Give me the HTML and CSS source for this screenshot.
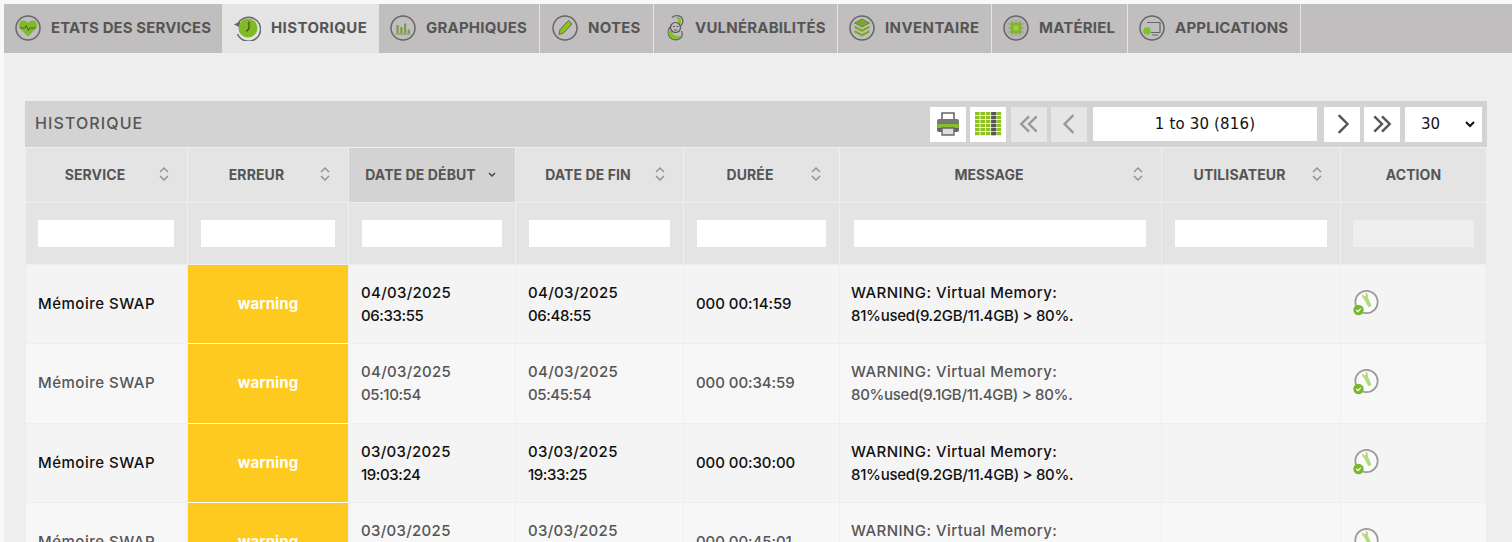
FILE: index.html
```html
<!DOCTYPE html>
<html lang="fr">
<head>
<meta charset="utf-8">
<title>Historique</title>
<link rel="stylesheet" href="styles.css">
</head>
<body>
<svg class="defs" width="0" height="0" aria-hidden="true">
  <defs>
    <symbol id="sort" viewBox="0 0 10 14"><path d="M1 5l4-4 4 4M1 9l4 4 4-4" fill="none" stroke="#8f8f8f" stroke-width="1.4"/></symbol>
    <symbol id="act" viewBox="0 0 26 28">
      <circle cx="13.500" cy="13" r="11.200" fill="#fafafa" stroke="#9a9a9a" stroke-width="1.700"/>
      <path d="M9.500 5l1.500 2.500 2-1-.5-3c2 .5 3 2.500 2.200 4.500l3.300 7.500c.8 2-2.200 3.500-3.200 1.500L11 9.800C9.200 9.300 8.700 7 9.500 5z" fill="#b2d97a"/>
      <circle cx="5.500" cy="21" r="5.200" fill="#78b82a"/>
      <path d="M3.200 21l1.800 1.600 2.800-3" fill="none" stroke="#fff" stroke-width="1.200"/>
    </symbol>
    <pattern id="cells" width="5.4" height="4" patternUnits="userSpaceOnUse"><rect width="4.6" height="3.2" fill="#8dc21f"/></pattern>
  </defs>
</svg>
<div class="page">
<nav class="tabs">
  <a class="tab tab-first">
    <svg class="ico" viewBox="0 0 26 26"><circle cx="13" cy="13" r="12" fill="none" stroke="#666" stroke-width="1.500"/><path d="M13 21.500L5 13.500C2.500 10 4.500 5.500 8.500 5.500c2 0 3.500 1 4.500 2.400 1-1.400 2.500-2.400 4.500-2.400 4 0 6 4.500 3.500 8z" fill="#7dbb27"/><path d="M5 13h5l1.300-2.500 2 5 1.500-2.500h6" fill="none" stroke="#555" stroke-width="1"/></svg>
    <span>ETATS DES SERVICES</span>
  </a>
  <a class="tab active">
    <svg class="ico" viewBox="0 0 28 26"><path d="M5 8.500A12 12 0 1 1 4.500 19" fill="none" stroke="#666" stroke-width="1.500"/><path d="M1 9.500l6-3v6z" fill="#666"/><circle cx="15" cy="13" r="9.500" fill="#7fba23"/><path d="M16 6.500v7l-2.500 3" fill="none" stroke="#444" stroke-width="1.200"/></svg>
    <span>HISTORIQUE</span>
  </a>
  <a class="tab">
    <svg class="ico" viewBox="0 0 26 26"><circle cx="13" cy="13" r="12" fill="none" stroke="#666" stroke-width="1.500"/><path d="M6.500 10h2.200v8.500H6.500zM10.300 12h2.200v6.500h-2.200zM14 8.500h2.200v10H14zM17.700 14.500h2.200v4h-2.200z" fill="#7a9c48"/><path d="M5.500 19h15" stroke="#7a9c48"/></svg>
    <span>GRAPHIQUES</span>
  </a>
  <a class="tab tab-notes">
    <svg class="ico" viewBox="0 0 26 26"><circle cx="13" cy="13" r="12" fill="none" stroke="#666" stroke-width="1.500"/><path d="M7 19.500l1-5 8.500-9 3.500 3.500-8.500 9z" fill="#8dc21f" stroke="#555" stroke-width=".8"/></svg>
    <span>NOTES</span>
  </a>
  <a class="tab tab-vuln">
    <svg class="ico vuln" viewBox="0 0 20 27"><path d="M6 3.500C9 .5 15 1 16.500 5c1 3-.5 6-3 8M4 13C1.500 16 1.500 21 4.500 24c3 2.500 8 2.500 10.500-.5 1.500-2 1.500-4.500.5-6.500" fill="none" stroke="#666" stroke-width="1.300"/><path d="M11.500 2.500c3.500 1 4.500 4.500 2.500 8l-2.500-1c1.300-2 1-4-1.500-5.500z" fill="#86c226"/><path d="M2.500 17c-.5 4.500 2.500 8 7 8 2.500 0 4.500-1 5.500-3.500-4 1.500-8 .5-9.500-4.500z" fill="#86c226"/><circle cx="9.500" cy="13.500" r="5" fill="#c0bebe" stroke="#555" stroke-width="1.200"/><path d="M7 12.500h2M10.500 12.500h2M8 16h3" stroke="#555"/></svg>
    <span>VULNÉRABILITÉS</span>
  </a>
  <a class="tab tab-wide">
    <svg class="ico" viewBox="0 0 26 26"><circle cx="13" cy="13" r="12" fill="none" stroke="#666" stroke-width="1.500"/><path d="M13 4l7.500 4-7.500 4-7.500-4z" fill="#7aab1c" stroke="#555" stroke-width=".6"/><path d="M5.500 10.500l7.500 4 7.500-4v2.500l-7.500 4-7.500-4z" fill="#7aab1c"/><path d="M5.500 15l7.500 4 7.500-4v2.500l-7.500 4-7.500-4z" fill="#7aab1c"/></svg>
    <span>INVENTAIRE</span>
  </a>
  <a class="tab">
    <svg class="ico" viewBox="0 0 26 26"><circle cx="13" cy="13" r="12" fill="#b6b4b4" stroke="#666" stroke-width="1.500"/><path d="M9 5.500v15M13 5.500v15M17 5.500v15M5.500 9h15M5.500 13h15M5.500 17h15" stroke="#8b9c6a"/><rect x="7.500" y="7.500" width="11" height="11" fill="#7fb52a"/><rect x="10.500" y="10.500" width="5" height="5" fill="#9ccc3f"/></svg>
    <span>MATÉRIEL</span>
  </a>
  <a class="tab">
    <svg class="ico" viewBox="0 0 26 26"><circle cx="13" cy="13" r="12" fill="none" stroke="#666" stroke-width="1.500"/><path d="M8 7.500h13v10H12M13 20h6" fill="none" stroke="#666" stroke-width="1.200"/><circle cx="8" cy="16" r="3.800" fill="#7fc12a"/></svg>
    <span>APPLICATIONS</span>
  </a>
</nav>

<main class="content">
  <section class="panel">
    <header class="bar">
      <h1 class="bar-title">HISTORIQUE</h1>
      <div class="pager">
        <button class="btn" type="button" aria-label="Imprimer">
          <svg width="24" height="26" viewBox="0 0 24 26"><path d="M6 9V2h12v7" fill="#fff" stroke="#666" stroke-width="1.600"/><path d="M1 10q0-2 2-2h18q2 0 2 2v3H1z" fill="#777"/><path d="M1 13h22v4H1z" fill="#86bd2e"/><path d="M1 17h22v2q0 2-2 2H3q-2 0-2-2z" fill="#666"/><path d="M6 17h12v7H6z" fill="#ddd" stroke="#666" stroke-width="1.400"/></svg>
        </button>
        <button class="btn btn-grid" type="button" aria-label="Colonnes">
          <svg width="27" height="24" viewBox="0 0 27 24"><rect width="27" height="24" fill="url(#cells)"/><path d="M16.200 0h5v3.200h-5zM16.200 4h5v3.200h-5zM16.200 8h5v3.200h-5zM16.200 12h5v3.200h-5zM16.200 16h5v3.200h-5zM16.200 20h5v3.200h-5z" fill="#555"/></svg>
        </button>
        <button class="btn off" type="button" aria-label="Première page">
          <svg class="chev" viewBox="0 0 20 20"><path d="M10 3l-7 7 7 7M17 3l-7 7 7 7" fill="none" stroke="#999" stroke-width="2.200"/></svg>
        </button>
        <button class="btn off" type="button" aria-label="Page précédente">
          <svg class="chev" viewBox="0 0 20 20"><path d="M14 2l-8 8 8 8" fill="none" stroke="#999" stroke-width="2.200"/></svg>
        </button>
        <input class="range" type="text" value="1 to 30 (816)" readonly>
        <button class="btn" type="button" aria-label="Page suivante">
          <svg class="chev" viewBox="0 0 20 20"><path d="M7 2l8 8-8 8" fill="none" stroke="#555" stroke-width="2.200"/></svg>
        </button>
        <button class="btn" type="button" aria-label="Dernière page">
          <svg class="chev" viewBox="0 0 20 20"><path d="M3 3l7 7-7 7M10 3l7 7-7 7" fill="none" stroke="#555" stroke-width="2.200"/></svg>
        </button>
        <select class="size"><option>30</option></select>
      </div>
    </header>
    <table class="grid">
      <colgroup>
        <col class="c1"><col class="c2"><col class="c3"><col class="c4"><col class="c5"><col class="c6"><col class="c7"><col class="c8">
      </colgroup>
      <thead>
        <tr class="heads">
          <th><div class="th"><span>SERVICE</span><svg class="sort"><use href="#sort"/></svg></div></th>
          <th><div class="th"><span>ERREUR</span><svg class="sort"><use href="#sort"/></svg></div></th>
          <th class="sorted"><div class="th"><span>DATE DE DÉBUT</span><svg class="sort" viewBox="0 0 10 14"><path d="M2 6l3 3 3-3" fill="none" stroke="#444" stroke-width="1.500"/></svg></div></th>
          <th><div class="th"><span>DATE DE FIN</span><svg class="sort"><use href="#sort"/></svg></div></th>
          <th><div class="th"><span>DURÉE</span><svg class="sort"><use href="#sort"/></svg></div></th>
          <th><div class="th"><span>MESSAGE</span><svg class="sort"><use href="#sort"/></svg></div></th>
          <th><div class="th"><span>UTILISATEUR</span><svg class="sort"><use href="#sort"/></svg></div></th>
          <th><div class="th plain"><span>ACTION</span></div></th>
        </tr>
        <tr class="filters">
          <td><input type="text"></td>
          <td><input type="text"></td>
          <td><input type="text"></td>
          <td><input type="text"></td>
          <td><input type="text"></td>
          <td><input type="text"></td>
          <td><input type="text"></td>
          <td><input class="disabled" type="text" disabled></td>
        </tr>
      </thead>
      <tbody>
        <tr class="odd">
          <td class="one svc">Mémoire SWAP</td><td class="one warn">warning</td>
          <td class="day">04/03/2025<br><span class="tm">06:33:55</span></td><td class="day">04/03/2025<br><span class="tm">06:48:55</span></td><td class="one dur">000 00:14:59</td>
          <td class="msg"><span class="ml">WARNING: Virtual Memory:</span><br><span class="ms">81%used(9.2GB/11.4GB) &gt; 80%.</span></td><td></td>
          <td><svg class="act"><use href="#act"/></svg></td>
        </tr>
        <tr class="even">
          <td class="one svc">Mémoire SWAP</td><td class="one warn">warning</td>
          <td class="day">04/03/2025<br><span class="tm">05:10:54</span></td><td class="day">04/03/2025<br><span class="tm">05:45:54</span></td><td class="one dur">000 00:34:59</td>
          <td class="msg"><span class="ml">WARNING: Virtual Memory:</span><br><span class="ms">80%used(9.1GB/11.4GB) &gt; 80%.</span></td><td></td>
          <td><svg class="act"><use href="#act"/></svg></td>
        </tr>
        <tr class="odd">
          <td class="one svc">Mémoire SWAP</td><td class="one warn">warning</td>
          <td class="day">03/03/2025<br><span class="tm">19:03:24</span></td><td class="day">03/03/2025<br><span class="tm">19:33:25</span></td><td class="one dur">000 00:30:00</td>
          <td class="msg"><span class="ml">WARNING: Virtual Memory:</span><br><span class="ms">81%used(9.2GB/11.4GB) &gt; 80%.</span></td><td></td>
          <td><svg class="act"><use href="#act"/></svg></td>
        </tr>
        <tr class="even">
          <td class="one svc">Mémoire SWAP</td><td class="one warn">warning</td>
          <td class="day">03/03/2025<br><span class="tm">17:18:23</span></td><td class="day">03/03/2025<br><span class="tm">18:03:24</span></td><td class="one dur">000 00:45:01</td>
          <td class="msg"><span class="ml">WARNING: Virtual Memory:</span><br><span class="ms">80%used(9.1GB/11.4GB) &gt; 80%.</span></td><td></td>
          <td><svg class="act"><use href="#act"/></svg></td>
        </tr>
      </tbody>
    </table>
  </section>
</main>
</div>
</body>
</html>
```

FILE: styles.css
```css
* { box-sizing: border-box; }
html, body { margin: 0; height: 542px; overflow: hidden; }
body { background: #f8f8f8; font-family: Inter, "Open Sans", sans-serif; color: #111; }
.defs { position: absolute; }
.page { padding: 4px 0 0 4px; }

.tabs { display: grid; grid-template-columns: 218px 157px 161px 114px 184px 154px 136px 173px 1fr; height: 49px; background: #c0bebe; }
.tab { display: flex; align-items: center; gap: 10px; padding: 0 0 2px 11px; border-right: 1px solid #e6e6e6; color: #555; font-size: 15px; font-weight: 700; letter-spacing: .2px; white-space: nowrap; }
.tab-first { border-right: 0; letter-spacing: .1px; }
.tab-wide { letter-spacing: .4px; }
.tab.active { background: #e4e4e4; border-right: 0; letter-spacing: .4px; }
.tab-notes { padding-left: 12px; }
.tab-vuln { padding-left: 12px; gap: 9px; }
.ico { width: 26px; height: 26px; flex: none; }
.tab.active .ico { width: 28px; }
.vuln { width: 20px; height: 27px; }

.content { background: #eee; height: 489px; padding: 48px 25px 0 21px; }
.panel { width: 1462px; }
.bar { display: flex; align-items: center; justify-content: space-between; height: 46px; background: #d3d3d3; padding: 0 5px 0 10px; }
.bar-title { margin: 0; padding-bottom: 2px; font-size: 16px; font-weight: 500; color: #555; letter-spacing: 1.100px; }
.pager { display: flex; align-items: center; gap: 4px; }
.btn { display: flex; align-items: center; justify-content: center; width: 36px; height: 35px; padding: 0; border: 0; background: #fff; }
.btn.off { background: #e6e6e6; }
.btn-grid { margin-right: 1px; }
.chev { width: 22px; height: 22px; }
.range { width: 224px; height: 34px; margin: 0 3px 0 2px; border: 0; background: #fff; text-align: center; font-family: "DejaVu Sans", sans-serif; font-size: 15px; letter-spacing: .15px; color: #111; outline: 0; }
.size { width: 77px; height: 35px; margin-left: 1px; border: 0; background: #fff url("data:image/svg+xml,%3Csvg xmlns='http://www.w3.org/2000/svg' width='10' height='7'%3E%3Cpath d='M1 1l4 4 4-4' fill='none' stroke='%23111' stroke-width='2'/%3E%3C/svg%3E") no-repeat 60px 14px; appearance: none; padding-left: 16px; font-family: "DejaVu Sans", sans-serif; font-size: 15px; color: #111; }

.grid { width: 1462px; table-layout: fixed; border-collapse: separate; border-spacing: 0; margin-top: 1px; }
.c1 { width: 163px; } .c2 { width: 161px; } .c3 { width: 167px; } .c4 { width: 168px; }
.c5 { width: 156px; } .c6 { width: 322px; } .c7 { width: 179px; } .c8 { width: 146px; }
.grid th, .grid td { padding: 0; border-right: 1px solid #eee; border-bottom: 1px solid #eee; }
.grid .heads th { height: 55px; background: #e4e4e4; color: #555; font-size: 14px; font-weight: 700; letter-spacing: .1px; padding-bottom: 2px; }
.grid .heads th.sorted { background: #d3d3d3; }
.grid .heads th:first-child, .grid .filters td:first-child, .grid tbody td:first-child { border-left: 1px solid #eee; }
.th { display: flex; align-items: center; padding-right: 18px; }
.th span { flex: 1; text-align: center; margin-left: 5px; }
.th.plain { padding-right: 0; }
.th.plain span { margin-left: 0; }
.sort { width: 10px; height: 14px; flex: none; }
.grid .filters td { height: 62px; background: #e4e4e4; padding: 0 13px; }
.grid .filters td:first-child { padding-left: 12px; }
.grid .filters td:nth-child(6) { padding: 0 15px 0 14px; }
.grid .filters td:nth-child(8) { padding: 0 12px; }
.filters input { display: block; width: 100%; height: 27px; border: 0; background: #fff; }
.filters input.disabled { background: #eee; }
.grid tbody td { height: 79px; padding: 0 12px; font-size: 15px; font-weight: 500; line-height: 23px; letter-spacing: .1px; }
.grid tbody .even td { height: 80px; padding-bottom: 2px; }
.grid tbody td.one { padding-bottom: 2px; }
.grid tbody td.svc { letter-spacing: .5px; }
.grid tbody td.day { letter-spacing: .3px; }
.grid tbody td.dur { letter-spacing: -.07px; }
.grid tbody td.msg { padding-left: 11px; padding-right: 0; white-space: nowrap; }
.ml { letter-spacing: .43px; }
.tm { letter-spacing: -.4px; }
.ms { letter-spacing: -.3px; }
.grid .odd td { background: #f4f4f4; color: #111; }
.grid .even td { background: #f7f7f7; color: #555; }
.grid tbody td.warn { background: #ffca1f; color: #fff; font-weight: 700; text-align: center; border-bottom-color: #fff; }
.act { display: block; width: 26px; height: 28px; margin-top: -2px; }
```
